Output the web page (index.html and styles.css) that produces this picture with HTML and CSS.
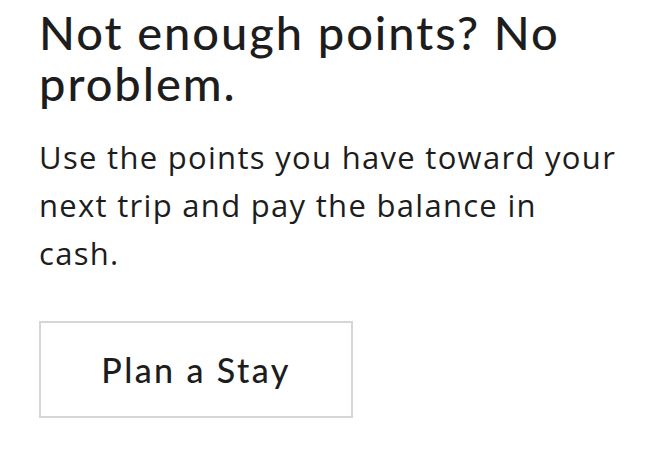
FILE: index.html
```html
<!DOCTYPE html>
<html lang="en">
<head>
<meta charset="utf-8">
<title>Not enough points? No problem.</title>
<link rel="stylesheet" href="styles.css">
</head>
<body>
<section class="promo">
  <h1 class="promo-title">Not enough points? No problem.</h1>
  <p class="promo-text">Use the points you have toward your next trip and pay the balance in cash.</p>
  <a class="promo-button" href="#">Plan a Stay</a>
</section>
</body>
</html>
```
FILE: styles.css
```css
html, body {
  margin: 0;
  padding: 0;
  background: #ffffff;
}
body {
  color: #1d1d1d;
  font-family: "Open Sans", "Liberation Sans", sans-serif;
}
.promo {
  padding: 7px 38px 0 39px;
  width: 583px;
  display: flex;
  flex-direction: column;
  align-items: flex-start;
}
.promo-title {
  margin: 0;
  font-family: "Lato", "Liberation Sans", sans-serif;
  font-weight: 500;
  font-size: 47px;
  line-height: 51px;
  letter-spacing: 1.95px;
}
.promo-text {
  margin: 24px 0 0;
  width: 580px;
  font-size: 31px;
  line-height: 48px;
  font-weight: 400;
  letter-spacing: 1.3px;
}
.promo-button {
  margin-top: 44px;
  box-sizing: border-box;
  width: 314px;
  height: 97px;
  border: 2px solid #d6d6d6;
  display: flex;
  align-items: center;
  justify-content: center;
  color: #1d1d1d;
  text-decoration: none;
  font-family: "Lato", "Liberation Sans", sans-serif;
  font-size: 34px;
  font-weight: 500;
  letter-spacing: 2.4px;
}
```
